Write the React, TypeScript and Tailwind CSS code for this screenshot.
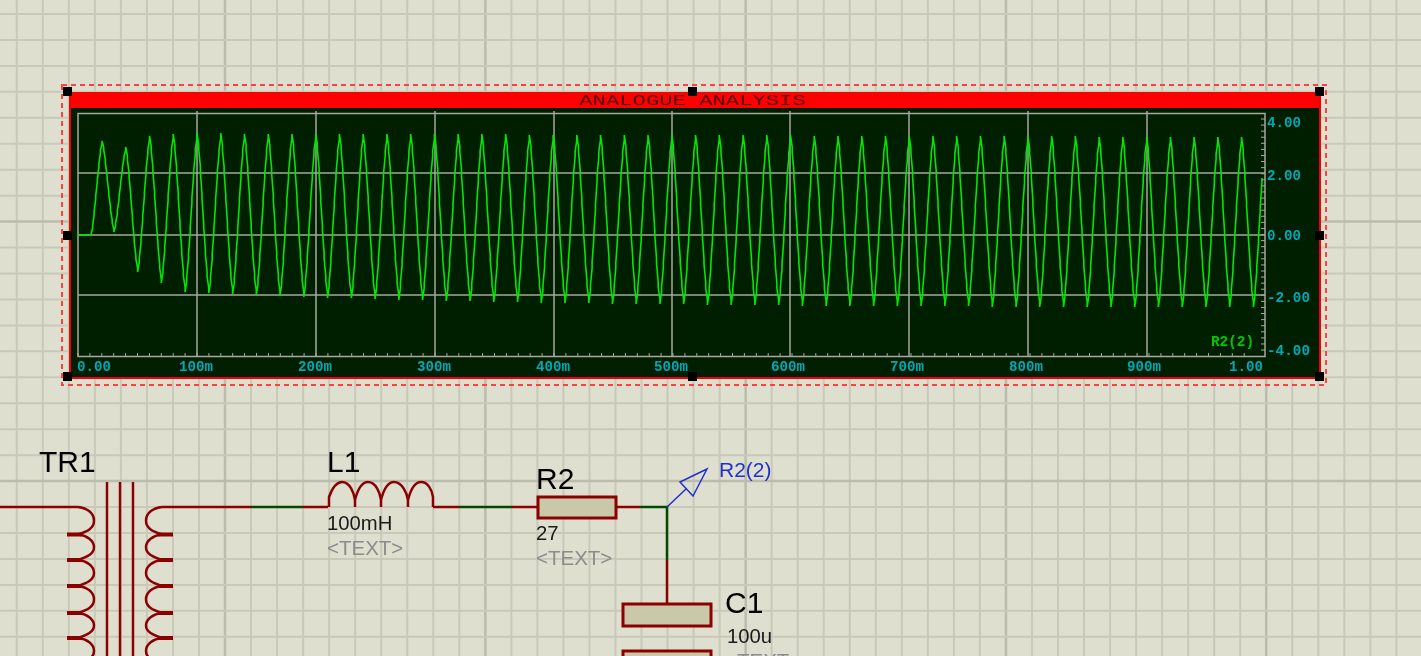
const gridX = Array.from({ length: 55 }, (_, i) => 16.8 + i * 26.03);
const gridY = Array.from({ length: 26 }, (_, i) => 14 + i * 25.95);

const majorX = [78, 197, 316, 435, 554, 672, 790, 909, 1028, 1147];
const majorY = [173, 235, 295];

const xLabels = [
  { x: 77, text: '0.00' },
  { x: 179, text: '100m' },
  { x: 298, text: '200m' },
  { x: 417, text: '300m' },
  { x: 536, text: '400m' },
  { x: 654, text: '500m' },
  { x: 771, text: '600m' },
  { x: 890, text: '700m' },
  { x: 1009, text: '800m' },
  { x: 1127, text: '900m' },
  { x: 1229, text: '1.00' },
];

const yLabels = [
  { y: 122, text: '4.00', x: 1267, w: 34 },
  { y: 175, text: '2.00', x: 1267, w: 34 },
  { y: 235, text: '0.00', x: 1267, w: 34 },
  { y: 297, text: '-2.00', x: 1267, w: 43 },
  { y: 350, text: '-4.00', x: 1267, w: 43 },
];

// peak / trough heights for the start-up transient, then a slow drift
const peakY = (k: number) => (k === 0 ? 141 : k === 1 ? 147 : k === 2 ? 136 : k === 3 ? 134 : 133 + (k / 48) * 4);
const troughY = (k: number) =>
  k === 0 ? 232 : k === 1 ? 272 : k === 2 ? 283 : 308 - 16 * Math.exp(-(k - 3) / 14);

function tracePath() {
  const period = 23.74;
  const extremes: [number, number][] = [[91, 235]];
  for (let k = 0; k < 50; k++) {
    extremes.push([102 + k * period, peakY(k)]);
    extremes.push([102 + (k + 0.5) * period, troughY(k)]);
  }
  let d = 'M78 235H91';
  for (let i = 1; i < extremes.length; i++) {
    const [x0, y0] = extremes[i - 1];
    const [x1, y1] = extremes[i];
    const steps = 7;
    for (let s = 1; s <= steps; s++) {
      const t = s / steps;
      const x = x0 + (x1 - x0) * t;
      if (x > 1263) return d;
      // closer to a triangle than a pure sine
      const shape = 0.55 * t + 0.45 * (0.5 - 0.5 * Math.cos(Math.PI * t));
      const y = y0 + (y1 - y0) * shape;
      d += `L${x.toFixed(1)} ${Math.round(y - (y1 - y0) * 0.03)}V${Math.round(y)}`;
    }
  }
  return d;
}

function Coil({ x, dir }: { x: number; dir: 1 | -1 }) {
  const ties = [507, 534.5, 560, 586, 613, 638, 664];
  const tie = x + dir * 10;
  const near = x + dir * 19;
  const far = x + dir * 26;
  return (
    <g fill="none" stroke="#8b0000" strokeWidth={2.5}>
      <path d={`M${x} 507H${tie}`} />
      {ties.slice(0, -1).map((y, i) => {
        const y2 = ties[i + 1];
        const mid = (y + y2) / 2;
        return (
          <path
            key={y}
            d={`M${tie} ${y}C${near} ${y + 1} ${far} ${y + 6} ${far} ${mid}C${far} ${y2 - 6} ${near} ${y2 - 3} ${tie} ${y2}`}
          />
        );
      })}
      {ties.slice(1, -1).map((y) => (
        <path key={y} d={`M${x - dir} ${y}H${x + dir * 13}`} strokeWidth={4} />
      ))}
    </g>
  );
}

function Schematic() {
  return (
    <svg className="absolute inset-0" width={1421} height={656}>
      {gridX.map((x, i) => (
        <line key={x} x1={x} x2={x} y1={0} y2={656} stroke={i % 10 === 8 ? '#bcbcad' : '#c9c9ba'} strokeWidth={i % 10 === 8 ? 2.5 : 2} />
      ))}
      {gridY.map((y, i) => (
        <line key={y} x1={0} x2={1421} y1={y} y2={y} stroke={i % 10 === 8 ? '#bcbcad' : '#c9c9ba'} strokeWidth={i % 10 === 8 ? 2.5 : 2} />
      ))}

      {/* selection outline */}
      <rect x={62} y={85} width={1264} height={300} fill="none" stroke="#ff4040" strokeWidth={2} strokeDasharray="5 4" />

      {/* transformer */}
      <Coil x={68} dir={1} />
      <Coil x={172} dir={-1} />
      <g stroke="#8b0000" strokeWidth={2.5}>
        <line x1={107} x2={107} y1={482} y2={656} />
        <line x1={120} x2={120} y1={482} y2={656} />
        <line x1={133} x2={133} y1={482} y2={656} />
      </g>

      {/* wires */}
      <g stroke="#8b0000" strokeWidth={2.5} fill="none">
        <path d="M0 507H68" />
        <path d="M172 507H251" />
        <path d="M303 507H328" />
        <path d="M433 507H459" />
        <path d="M512 507H538" />
        <path d="M617 507H640" />
        <path d="M667 560V604" />
      </g>
      <g stroke="#004a00" strokeWidth={2.5} fill="none">
        <path d="M251 507H303" />
        <path d="M459 507H512" />
        <path d="M640 507H667V560" />
      </g>

      {/* L1 */}
      <path
        d="M329 507V497C333 486 338 482 342 482C350 482 354 493 355 500V507M355 500C358 488 363 482 368 482C376 482 380 493 381 500V507M381 500C384 488 389 482 394 482C402 482 407 493 408 500V507M408 500C411 488 416 482 421 482C428 482 432 490 433 497V507"
        fill="none"
        stroke="#8b0000"
        strokeWidth={2.5}
      />

      {/* R2 and C1 bodies */}
      <rect x={538} y={497} width={78} height={21} fill="#c9c9a9" stroke="#8b0000" strokeWidth={3} />
      <rect x={623} y={604} width={88} height={22} fill="#c9c9a9" stroke="#8b0000" strokeWidth={3} />
      <rect x={623} y={651} width={88} height={22} fill="#c9c9a9" stroke="#8b0000" strokeWidth={3} />

      {/* probe */}
      <path d="M667 507L686 489M707 469L680 482L693 496Z" fill="none" stroke="#2030d0" strokeWidth={1.5} />
    </svg>
  );
}

function Plot() {
  const xTicks = Array.from({ length: 99 }, (_, i) => 78 + i * 11.9).filter((x) => x < 1262);
  const yTicks = Array.from({ length: 40 }, (_, i) => 119 + i * 6.08).filter((y) => y < 355);
  const mono = { fontFamily: '"Liberation Mono", monospace' };
  return (
    // coordinates stay in page pixels, the viewBox starts at the body's corner
    <svg className="block" width={1248} height={269} viewBox="71 108 1248 269">
      <g stroke="#a8a89f" strokeWidth={1.5}>
        <rect x={78} y={113.5} width={1187} height={243} fill="none" />
        {majorX.slice(1).map((x) => (
          <line key={x} x1={x} x2={x} y1={111} y2={356} />
        ))}
        {majorY.map((y) => (
          <line key={y} x1={78} x2={1265} y1={y} y2={y} />
        ))}
        {xTicks.map((x) => (
          <line key={x} x1={x} x2={x} y1={353} y2={356} strokeWidth={1} />
        ))}
        {yTicks.map((y) => (
          <line key={y} x1={1261} x2={1265} y1={y} y2={y} strokeWidth={1} />
        ))}
      </g>

      <path d={tracePath()} fill="none" stroke="#00e800" strokeWidth={1.6} />

      <g fill="#00a8b8" fontSize={14} fontWeight={700} style={mono}>
        {xLabels.map((l) => (
          <text key={l.text} x={l.x} y={371} textLength={34} lengthAdjust="spacingAndGlyphs">
            {l.text}
          </text>
        ))}
        {yLabels.map((l) => (
          <text key={l.text} x={l.x} y={l.y + 5} textLength={l.w} lengthAdjust="spacingAndGlyphs">
            {l.text}
          </text>
        ))}
      </g>
      <text x={1211} y={346} textLength={43} lengthAdjust="spacingAndGlyphs" fontSize={14} fontWeight={700} fill="#00c800" style={mono}>
        R2(2)
      </text>
    </svg>
  );
}

function Handle() {
  return <div className="h-[9px] w-[9px] bg-black" />;
}

function PartLabel({
  name,
  value,
  className,
  valueGap,
}: {
  name: string;
  value: string;
  className: string;
  valueGap: string;
}) {
  return (
    <div className={`absolute flex flex-col items-start ${className}`}>
      <span className="text-[30px] leading-9 text-black">{name}</span>
      <span className={`text-[20.3px] leading-[25px] text-[#1a1a1a] ${valueGap}`}>{value}</span>
      <span className="text-[20.5px] leading-6 text-[#8c8c8c]">&lt;TEXT&gt;</span>
    </div>
  );
}

export default function App() {
  return (
    <div className="relative h-[656px] w-[1421px] overflow-hidden bg-[#dfdfd0] font-['Liberation_Sans',sans-serif] blur-[0.3px]">
      <Schematic />

      {/* graph window */}
      <div className="absolute left-[69px] top-[92px] flex h-[287px] w-[1252px] flex-col border-x-2 border-b-2 border-[#f00000] bg-[#001f00]">
        <div className="flex h-4 shrink-0 items-center justify-center bg-[#ff0000]">
          <span className="translate-x-[-2px] translate-y-[1px] scale-x-[1.48] font-['Liberation_Mono',monospace] text-[15px] leading-none text-[#5a0000]">
            ANALOGUE ANALYSIS
          </span>
        </div>
        <Plot />
      </div>

      {/* selection handles */}
      <div className="absolute left-[63px] top-[87px] grid grid-cols-[625px_627px_9px] grid-rows-[144px_141px_9px]">
        <Handle />
        <Handle />
        <Handle />
        <Handle />
        <div />
        <Handle />
        <Handle />
        <Handle />
        <Handle />
      </div>

      {/* component labels */}
      <span className="absolute left-[39px] top-[444px] text-[30px] leading-9 text-black">TR1</span>
      <PartLabel name="L1" value="100mH" className="left-[327px] top-[444px]" valueGap="mt-[31px]" />
      <PartLabel name="R2" value="27" className="left-[536px] top-[461px]" valueGap="mt-6" />
      <PartLabel name="C1" value="100u" className="left-[725px] top-[585px]" valueGap="mt-[3px] ml-[2px]" />
      <span className="absolute left-[719px] top-[458px] text-[21px] leading-6 text-[#2030d0]">R2(2)</span>
    </div>
  );
}
